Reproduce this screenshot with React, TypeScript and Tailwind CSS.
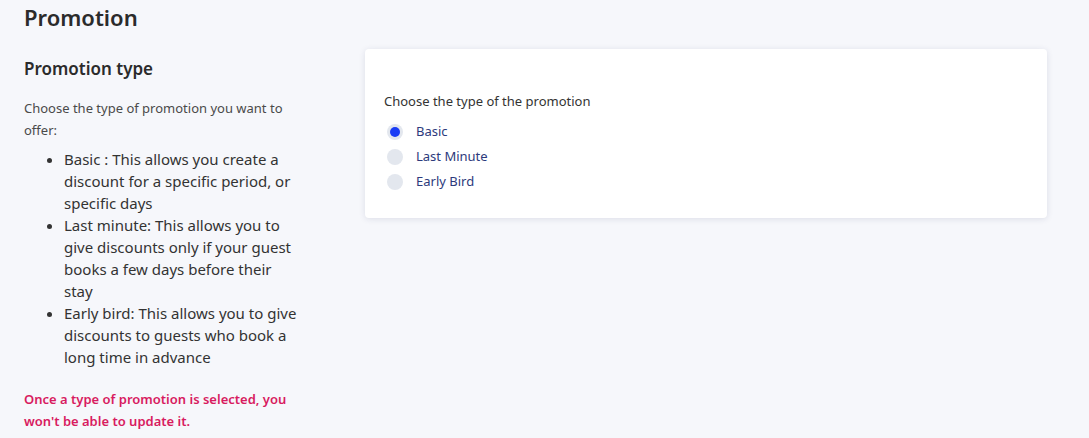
import React, { useState } from 'react';

const options = ['Basic', 'Last Minute', 'Early Bird'];

const font = { fontFamily: '"Noto Sans", "Open Sans", sans-serif' };

export default function App() {
  const [selected, setSelected] = useState('Basic');

  return (
    <div className="min-h-[438px] w-full bg-[#f6f7fb] text-[#2c2c2c]" style={font}>
      <div className="px-6 pt-[3px]">
        <h1 className="text-[22px] font-semibold leading-[28px] text-[#2b2b2b]">Promotion</h1>

        <div className="mt-[18px] flex items-start gap-[61px]">
          <div className="w-[280px] shrink-0 pt-[8px]">
            <h2 className="text-[17px] font-semibold leading-[24px] text-[#2b2b2b]">Promotion type</h2>
            <p className="mt-[16px] text-[13px] leading-[22px] text-[#4a4a4a]">
              Choose the type of promotion you want to offer:
            </p>
            <ul className="mt-[7px] list-disc pl-[40px] text-[15px] leading-[22px] text-[#333]">
              <li>Basic : This allows you create a discount for a specific period, or specific days</li>
              <li>Last minute: This allows you to give discounts only if your guest books a few days before their stay</li>
              <li>Early bird: This allows you to give discounts to guests who book a long time in advance</li>
            </ul>
            <p className="mt-[20px] text-[13px] font-semibold leading-[22px] text-[#d81b60]">
              Once a type of promotion is selected, you won't be able to update it.
            </p>
          </div>

          <div className="h-[169px] w-[682px] rounded-[4px] bg-white px-[19px] pt-[43px] shadow-[0_1px_6px_rgba(30,40,90,0.12)]">
            <p className="text-[13px] leading-[18px] text-[#333]">Choose the type of the promotion</p>
            <div className="mt-[9px] flex flex-col">
              {options.map((o) => (
                <label
                  key={o}
                  className="flex h-[25px] cursor-pointer items-center gap-[13px]"
                  onClick={() => setSelected(o)}
                >
                  <span className="ml-[3px] flex h-[16px] w-[16px] items-center justify-center rounded-full bg-[#e3e7ee]">
                    {selected === o && <span className="h-[10px] w-[10px] rounded-full bg-[#1a3cf5]" />}
                  </span>
                  <span className="text-[13px] text-[#2d3a7c]">{o}</span>
                </label>
              ))}
            </div>
          </div>
        </div>
      </div>
    </div>
  );
}
